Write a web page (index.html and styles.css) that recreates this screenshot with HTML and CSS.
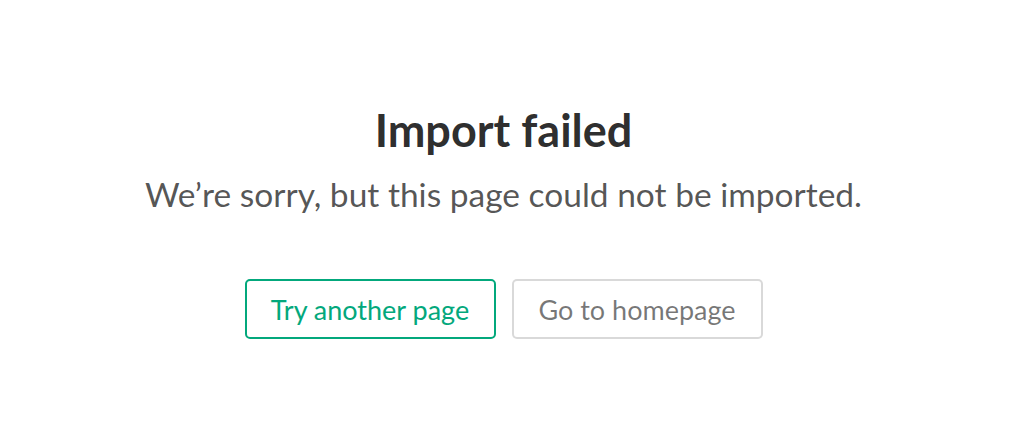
FILE: index.html
```html
<!DOCTYPE html>
<html lang="en">
<head>
    <meta charset="UTF-8">
    <meta name="viewport" content="width=device-width, initial-scale=1.0">
    <title>Import failed</title>
    <link rel="stylesheet" href="styles.css">
</head>
<body>

    <div class="box">
        <h1 class="title">Import failed</h1>
        <p class="subtitle">We’re sorry, but this page could not be imported.</p>
        <div class="actions">
            <button class="btn btn-green">Try another page</button>
            <button class="btn">Go to homepage</button>
        </div>
    </div>

</body>
</html>
```

FILE: styles.css
```css
body {
    margin: 0;
    font-family: Lato, "Open Sans", sans-serif;
    background: #fff;
}
.box {
    display: flex;
    flex-direction: column;
    align-items: center;
    padding-top: 102px;
    padding-right: 17px;
}
.title {
    margin: 0;
    font-size: 45px;
    font-weight: 700;
    color: rgba(0, 0, 0, .84);
    line-height: 56px;
}
.subtitle {
    margin: 15px 0 0;
    font-size: 33.5px;
    color: rgba(0, 0, 0, .68);
    line-height: 42px;
}
.actions {
    display: flex;
    gap: 16px;
    margin-top: 64px;
}
.btn {
    height: 60px;
    width: 251px;
    padding: 0;
    font-family: inherit;
    font-size: 27px;
    color: rgba(0, 0, 0, .54);
    background: #fff;
    border: 2px solid rgba(0, 0, 0, .15);
    border-radius: 5px;
}
.btn-green {
    color: #03a87c;
    border-color: #03a87c;
}
```
